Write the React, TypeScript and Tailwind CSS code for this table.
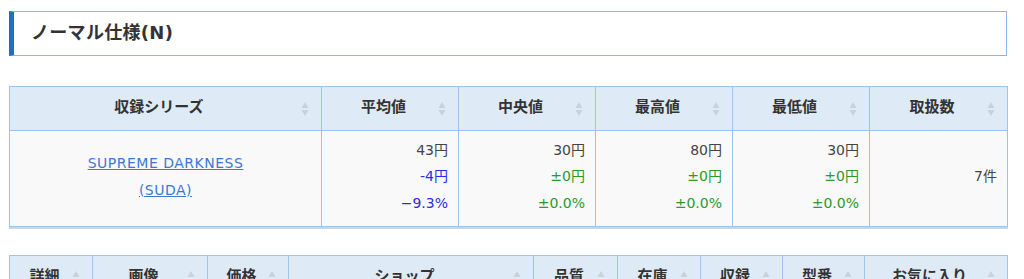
import React from "react";

const font = { fontFamily: '"DejaVu Sans", "Noto Sans CJK JP", sans-serif' };

function SortIcon() {
  return (
    <svg width="8" height="16" viewBox="0 0 8 16" className="absolute right-[12px] top-1/2 -translate-y-1/2">
      <path d="M4 1 L7.5 7 L0.5 7 Z" fill="#c9d2da" />
      <path d="M4 15 L7.5 9 L0.5 9 Z" fill="#c9d2da" />
    </svg>
  );
}

const stats = [
  { main: "43円", diff: "-4円", pct: "−9.3%", color: "text-[#2b2bf0]" },
  { main: "30円", diff: "±0円", pct: "±0.0%", color: "text-[#2a9a2a]" },
  { main: "80円", diff: "±0円", pct: "±0.0%", color: "text-[#2a9a2a]" },
  { main: "30円", diff: "±0円", pct: "±0.0%", color: "text-[#2a9a2a]" },
];

const th = "relative h-[44px] pb-[2px] pr-[13px] border border-[#9dc3e6] bg-[#deeaf5] text-[15px] font-bold text-[#333] text-center";

export default function App() {
  return (
    <div className="w-[1024px] h-[279px] overflow-hidden bg-white pt-[11px] pl-[9px]" style={font}>
      <div className="w-[998px] h-[45px] border border-[#8db7e3] border-l-[5px] border-l-[#1e6fbf] flex items-center pl-[17px] pb-[2px]">
        <h2 className="text-[18px] font-bold text-[#333] tracking-[0.3px]">ノーマル仕様(N)</h2>
      </div>

      <table className="mt-[30px] w-[998px] border-collapse table-fixed shadow-[0_2px_0_#d4d4d4]">
        <colgroup>
          <col className="w-[312px]" />
          <col className="w-[137px]" />
          <col className="w-[137px]" />
          <col className="w-[137px]" />
          <col className="w-[137px]" />
          <col className="w-[138px]" />
        </colgroup>
        <thead>
          <tr>
            {["収録シリーズ", "平均値", "中央値", "最高値", "最低値", "取扱数"].map((h) => (
              <th key={h} className={th}>
                {h}
                <SortIcon />
              </th>
            ))}
          </tr>
        </thead>
        <tbody>
          <tr className="bg-[#f9f9f9] text-[14px] text-[#444]">
            <td className="h-[96px] pb-[4px] border border-[#9dc3e6] text-center leading-[27px]">
              <a className="text-[#3b78d4] underline block tracking-[0.5px]">SUPREME DARKNESS</a>
              <a className="text-[#3b78d4] underline block tracking-[0.5px]">(SUDA)</a>
            </td>
            {stats.map((s, i) => (
              <td key={i} className="border border-[#9dc3e6] text-right pr-[10px] pb-[4px] leading-[26.5px]">
                <div>{s.main}</div>
                <div className={s.color}>{s.diff}</div>
                <div className={s.color}>{s.pct}</div>
              </td>
            ))}
            <td className="border border-[#9dc3e6] text-right pr-[10px] pb-[4px]">7件</td>
          </tr>
        </tbody>
      </table>

      <table className="mt-[28px] w-[998px] border-collapse table-fixed">
        <colgroup>
          <col className="w-[83px]" />
          <col className="w-[115px]" />
          <col className="w-[81px]" />
          <col className="w-[245px]" />
          <col className="w-[84px]" />
          <col className="w-[83px]" />
          <col className="w-[82px]" />
          <col className="w-[82px]" />
          <col className="w-[143px]" />
        </colgroup>
        <thead>
          <tr>
            {["詳細", "画像", "価格", "ショップ", "品質", "在庫", "収録", "型番", "お気に入り"].map((h) => (
              <th key={h} className={th}>
                {h}
                <SortIcon />
              </th>
            ))}
          </tr>
        </thead>
      </table>
    </div>
  );
}
